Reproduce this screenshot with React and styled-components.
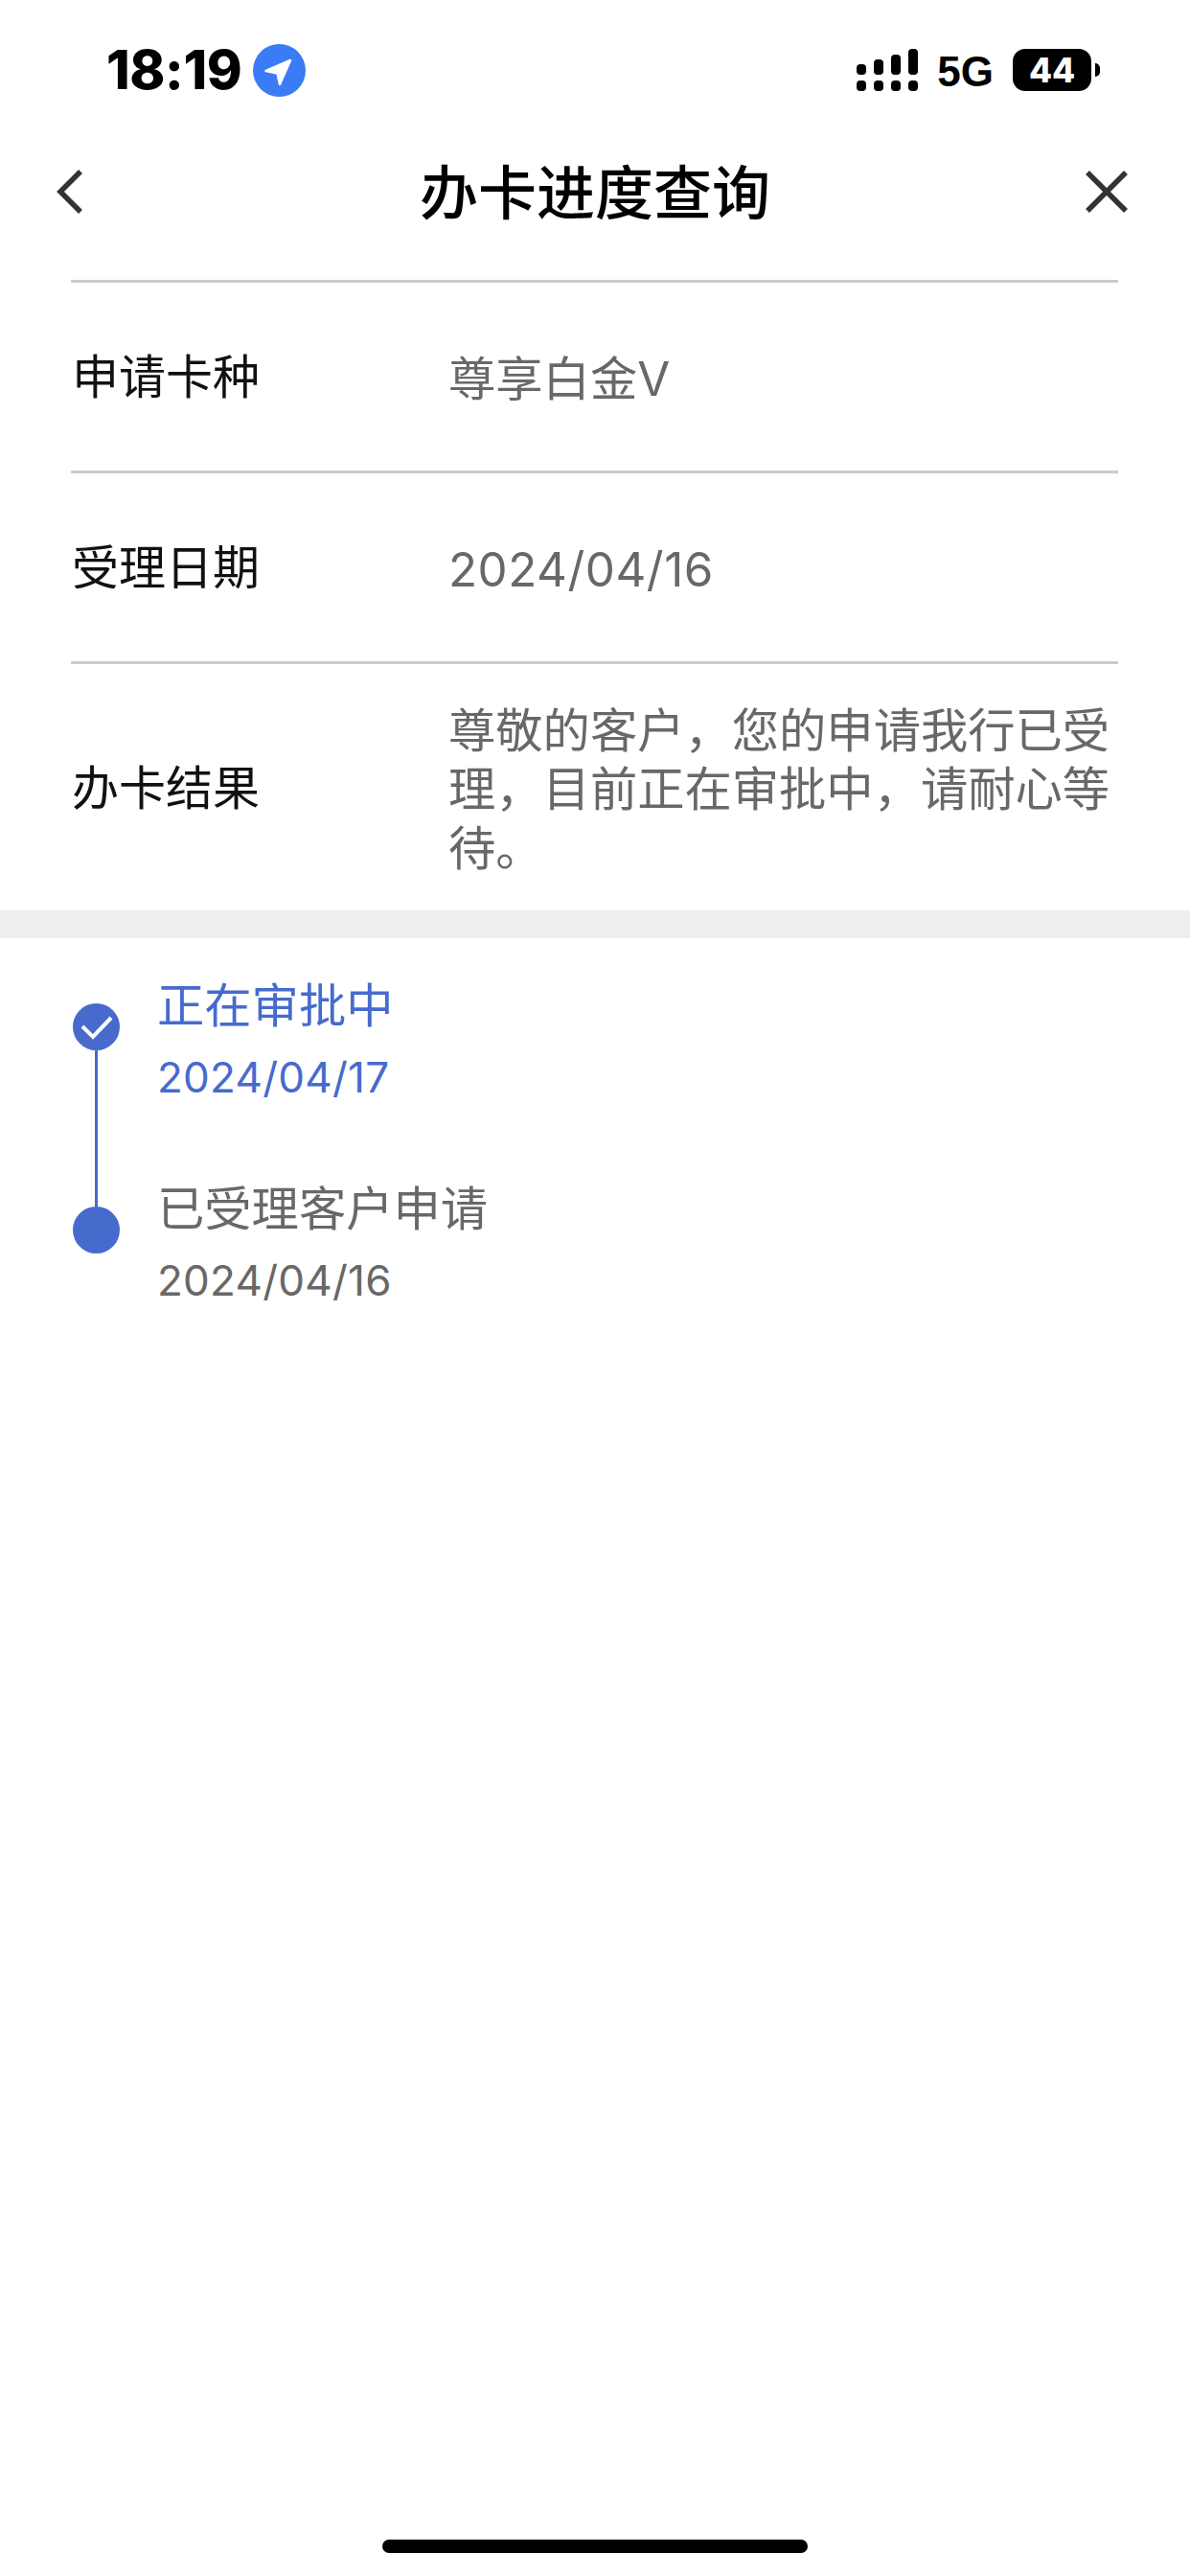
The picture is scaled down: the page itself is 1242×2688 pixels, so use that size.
import React from "react";
import styled, { createGlobalStyle } from "styled-components";

const Global = createGlobalStyle`
  html, body { margin: 0; padding: 0; background: #fff; }
  body { font-family: "Inter", "Noto Sans CJK SC", sans-serif; }
`;
const Page = styled.div`
  width: 1242px; height: 2688px; background: #fff; display: flex; flex-direction: column; overflow: hidden;
`;
const StatusBar = styled.div`
  height: 137px; flex: none; display: flex; justify-content: space-between; align-items: flex-start; padding: 46px 94px 0 111px; box-sizing: border-box;
`;
const TimeGroup = styled.div`display: flex; align-items: center; gap: 12px; height: 55px;`;
const Time = styled.span`font: 800 56px/55px "Inter", sans-serif; color: #000; letter-spacing: -0.4px;`;
const StatusRight = styled.div`display: flex; align-items: center; gap: 20px; height: 50px; margin-top: 2px;`;
const Network = styled.span`font: 700 44px/50px "Liberation Sans", sans-serif; color: #000; padding-top: 4px;`;
const Battery = styled.div`
  position: relative; width: 82px; height: 44px; border-radius: 13px; background: #000; color: #fff;
  font: 800 35px/44px "Inter", sans-serif; text-align: center; margin-right: 9px;
  &::after { content: ""; position: absolute; left: 86px; top: 15px; width: 5px; height: 14px; border-radius: 0 7px 7px 0; background: #000; }
`;
const NavBar = styled.div`
  height: 126px; flex: none; padding: 0 65px 0 59px; box-sizing: border-box; display: flex; justify-content: space-between; align-items: center; position: relative;
`;
const NavTitle = styled.h1`
  position: absolute; left: 0; right: 0; top: 0; margin: 0; text-align: center; font: 500 61px/122px "Noto Sans CJK SC", sans-serif; color: #000;
`;
const Rows = styled.div`margin: 29px 75px 0 74px; flex: none;`;
const Row = styled.div`
  display: grid; grid-template-columns: 394px 1fr; align-items: center; min-height: ${p => p.$h}px;
  border-top: 3px solid #ccc; box-sizing: border-box;
`;
const Label = styled.div`font: 400 49px/62px "Noto Sans CJK SC", sans-serif; color: #111; padding: 0 0 6px 1px;`;
const Value = styled.div`font: 400 49.3px/61.5px "Inter", "Noto Sans CJK SC", sans-serif; color: #686868; width: 700px; padding-top: 5px;`;
const DateValue = styled(Value)`letter-spacing: 0.55px;`;
const Band = styled.div`height: 29px; background: #eee; flex: none;`;
const Timeline = styled.div`padding: 36px 0 0 76px; display: flex; flex-direction: column;`;
const Step = styled.div`display: grid; grid-template-columns: 49px 1fr; column-gap: 39px; height: 212px;`;
const Rail = styled.div`display: flex; flex-direction: column; align-items: center; padding-top: 32px;`;
const Dot = styled.div`width: 49px; height: 49px; flex: none; border-radius: 50%; background: #466bcd; display: flex; align-items: center; justify-content: center;`;
const Connector = styled.div`width: 3.5px; flex: 1; background: #466bcd; margin-bottom: -32px;`;
const StepTitle = styled.div`font: 400 49.3px/62px "Noto Sans CJK SC", sans-serif; color: ${p => p.$active ? "#466bcd" : "#686868"};`;
const StepDate = styled.div`font: 400 44px/52px "Inter", sans-serif; letter-spacing: 0.25px; color: ${p => p.$active ? "#466bcd" : "#686868"}; margin-top: 21px;`;
const Spacer = styled.div`flex: 1;`;
const Home = styled.div`width: 444px; height: 14px; border-radius: 7px; background: #000; margin: 0 auto 24px; flex: none;`;

const Signal = () => (
  <svg width="64" height="44" viewBox="0 0 64 44">
    <rect x="0" y="16" width="10" height="11" rx="4" /><rect x="0" y="33" width="10" height="11" rx="4" />
    <rect x="18" y="11" width="10" height="16" rx="4" /><rect x="18" y="33" width="10" height="11" rx="4" />
    <rect x="36" y="6" width="10" height="21" rx="4" /><rect x="36" y="33" width="10" height="11" rx="4" />
    <rect x="54" y="0" width="10" height="27" rx="4" /><rect x="54" y="33" width="10" height="11" rx="4" />
  </svg>
);
const Location = () => (
  <svg width="55" height="55" viewBox="0 0 55 55">
    <circle cx="27.5" cy="27.5" r="27.5" fill="#3b7cf6" />
    <path d="M13.5 28 L39 17 L28 42 L25.5 30.5 Z" fill="#fff" stroke="#fff" strokeWidth="2.5" strokeLinejoin="round" />
  </svg>
);
const Back = () => (
  <svg width="27" height="46" viewBox="0 0 27 46" fill="none" stroke="#333" strokeWidth="5.5">
    <path d="M25 2 L4 23 L25 44" />
  </svg>
);
const Close = () => (
  <svg width="44" height="44" viewBox="0 0 44 44" fill="none" stroke="#333" strokeWidth="5.5">
    <path d="M2 2 L42 42 M42 2 L2 42" />
  </svg>
);
const Check = () => (
  <svg width="34" height="26" viewBox="0 0 34 26" fill="none" stroke="#fff" strokeWidth="4">
    <path d="M2 12 L13 23 L32 3" />
  </svg>
);

export default function App() {
  return (
    <Page>
      <Global />
      <StatusBar>
        <TimeGroup><Time>18:19</Time><Location /></TimeGroup>
        <StatusRight><Signal /><Network>5G</Network><Battery>44</Battery></StatusRight>
      </StatusBar>
      <NavBar>
        <NavTitle>办卡进度查询</NavTitle>
        <Back /><Close />
      </NavBar>
      <Rows>
        <Row $h={199}><Label>申请卡种</Label><Value>尊享白金V</Value></Row>
        <Row $h={199}><Label>受理日期</Label><DateValue>2024/04/16</DateValue></Row>
        <Row $h={260}><Label>办卡结果</Label><Value>尊敬的客户，您的申请我行已受理，目前正在审批中，请耐心等待。</Value></Row>
      </Rows>
      <Band />
      <Timeline>
        <Step>
          <Rail><Dot><Check /></Dot><Connector /></Rail>
          <div><StepTitle $active>正在审批中</StepTitle><StepDate $active>2024/04/17</StepDate></div>
        </Step>
        <Step>
          <Rail><Dot /></Rail>
          <div><StepTitle>已受理客户申请</StepTitle><StepDate>2024/04/16</StepDate></div>
        </Step>
      </Timeline>
      <Spacer />
      <Home />
    </Page>
  );
}
